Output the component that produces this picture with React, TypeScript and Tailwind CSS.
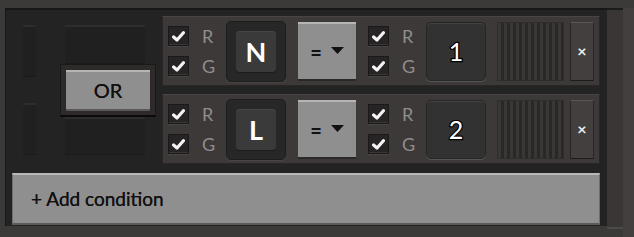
import React from "react";

const font = "font-['Lato','Noto_Sans',sans-serif]";

function CheckBox() {
  return (
    <div className="w-[21px] h-[20px] bg-[#262424] border border-[#1a1818] shadow-[inset_0_-1px_0_#3a3636,0_1px_0_#4a4545] flex items-center justify-center">
      <svg width="13" height="11" viewBox="0 0 13 11">
        <path d="M1.6 6 L5 9 L11.4 1.8" fill="none" stroke="#f4f4f4" strokeWidth="3.2" strokeLinecap="round" strokeLinejoin="round" />
      </svg>
    </div>
  );
}

function WireChecks() {
  return (
    <div className="flex items-center">
      <div className="flex flex-col gap-[10px]">
        <CheckBox />
        <CheckBox />
      </div>
      <div className="ml-[13px] w-[12px] flex flex-col gap-[8px] text-[18px] leading-[22px] text-[#8f8d8d]">
        <span>R</span>
        <span>G</span>
      </div>
    </div>
  );
}

function ConditionRow({ signal, value }: { signal: string; value: string }) {
  return (
    <div className="w-[438px] h-[70px] bg-[#3d3939] border border-[#2a2626] border-t-[#4a4545] flex items-center pl-[5px]">
      <WireChecks />
      <div className="ml-[12px] w-[60px] h-[61px] rounded-[5px] bg-[#282727] border border-[#1e1d1d] shadow-[0_1px_0_#4a4545] flex items-center justify-center">
        <div className="w-[40px] h-[41px] rounded-[4px] bg-[#3b3a3a] shadow-[inset_0_1px_0_#474646,0_1px_0_#1c1c1c] flex items-center justify-center text-white font-bold text-[27px] leading-none">
          {signal}
        </div>
      </div>
      <div className="ml-[12px] w-[58px] h-[59px] bg-[#8f8f8f] border-t-2 border-t-[#b5b5b5] border-b-2 border-b-[#2a2828] flex items-center justify-center gap-[9px]">
        <span className="text-[#111] font-bold text-[20px] leading-none pt-[1px]">=</span>
        <svg width="13" height="8" viewBox="0 0 13 8">
          <path d="M0 0 H13 L6.5 7 Z" fill="#111" />
        </svg>
      </div>
      <div className="ml-[12px]">
        <WireChecks />
      </div>
      <div className="ml-[12px] w-[60px] h-[59px] rounded-[5px] bg-[#333232] border border-[#262525] shadow-[inset_0_1px_0_#444,0_1px_0_#555] flex items-center justify-center text-white text-[25px] leading-none [-webkit-text-stroke:2.5px_#000] [paint-order:stroke_fill]">
        {value}
      </div>
      <div className="ml-[11px] w-[67px] h-[59px] bg-[repeating-linear-gradient(90deg,#3a3737_0_3px,#292727_3px_6px)] border border-[#2f2c2c]" />
      <div className="ml-[6px] w-[24px] h-[59px] bg-[#433f3f] border border-[#2a2626] border-t-[#5a5555] border-b-[#1d1b1b] flex items-center justify-center text-[#eee] font-bold text-[16px] leading-none">
        ×
      </div>
    </div>
  );
}

function Slot({ className }: { className: string }) {
  return <div className={`bg-[#212020] border-t-2 border-t-[#2e2c2c] border-b border-b-[#1b1a1a] ${className}`} />;
}

export default function App() {
  return (
    <div className={`w-[634px] h-[237px] bg-[#3c3939] flex pt-[8px] pl-[5px] ${font}`}>
      <div className="w-[602px] h-[218px] bg-[#242323] border-t-2 border-l border-[#181717] flex flex-col">
        <div className="flex pt-[6px]">
          <div className="w-[156px] flex pl-[17px] pt-[9px]">
            <div className="flex flex-col gap-[26px]">
              <Slot className="w-[13px] h-[52px]" />
              <Slot className="w-[13px] h-[52px]" />
            </div>
            <div className="ml-[24px] flex flex-col">
              <Slot className="ml-[5px] w-[80px] h-[39px]" />
              <div className="w-[96px] h-[53px] bg-[#2e2a2a] border border-[#1a1818] border-b-2 border-b-[#0c0b0b] flex items-center justify-center">
                <div className="w-[84px] h-[41px] bg-[#8f8f8f] border-t-2 border-t-[#b5b5b5] border-b-2 border-b-[#5a5858] flex items-center justify-center text-[#111] text-[20px] [text-shadow:0_0_0.6px_#111]">
                  OR
                </div>
              </div>
              <Slot className="ml-[5px] w-[80px] h-[38px]" />
            </div>
          </div>
          <div className="flex flex-col gap-[8px]">
            <ConditionRow signal="N" value="1" />
            <ConditionRow signal="L" value="2" />
          </div>
        </div>
        <div className="mt-[9px] ml-[6px] w-[588px] h-[52px] bg-[#8f8f8f] border-t-2 border-t-[#b8b8b8] border-b-2 border-b-[#5c5a5a] border-x border-x-[#6e6c6c] flex items-center pl-[18px] text-[#111] text-[19px] [text-shadow:0_0_0.6px_#111]">
          + Add condition
        </div>
      </div>
      <div className="w-[16px] h-[221px] bg-[#3a3636] border-t-2 border-[#1c1b1b] border-b-2 border-b-[#4d4949]" />
      <div className="flex-1 bg-[#433f3f]" />
    </div>
  );
}
